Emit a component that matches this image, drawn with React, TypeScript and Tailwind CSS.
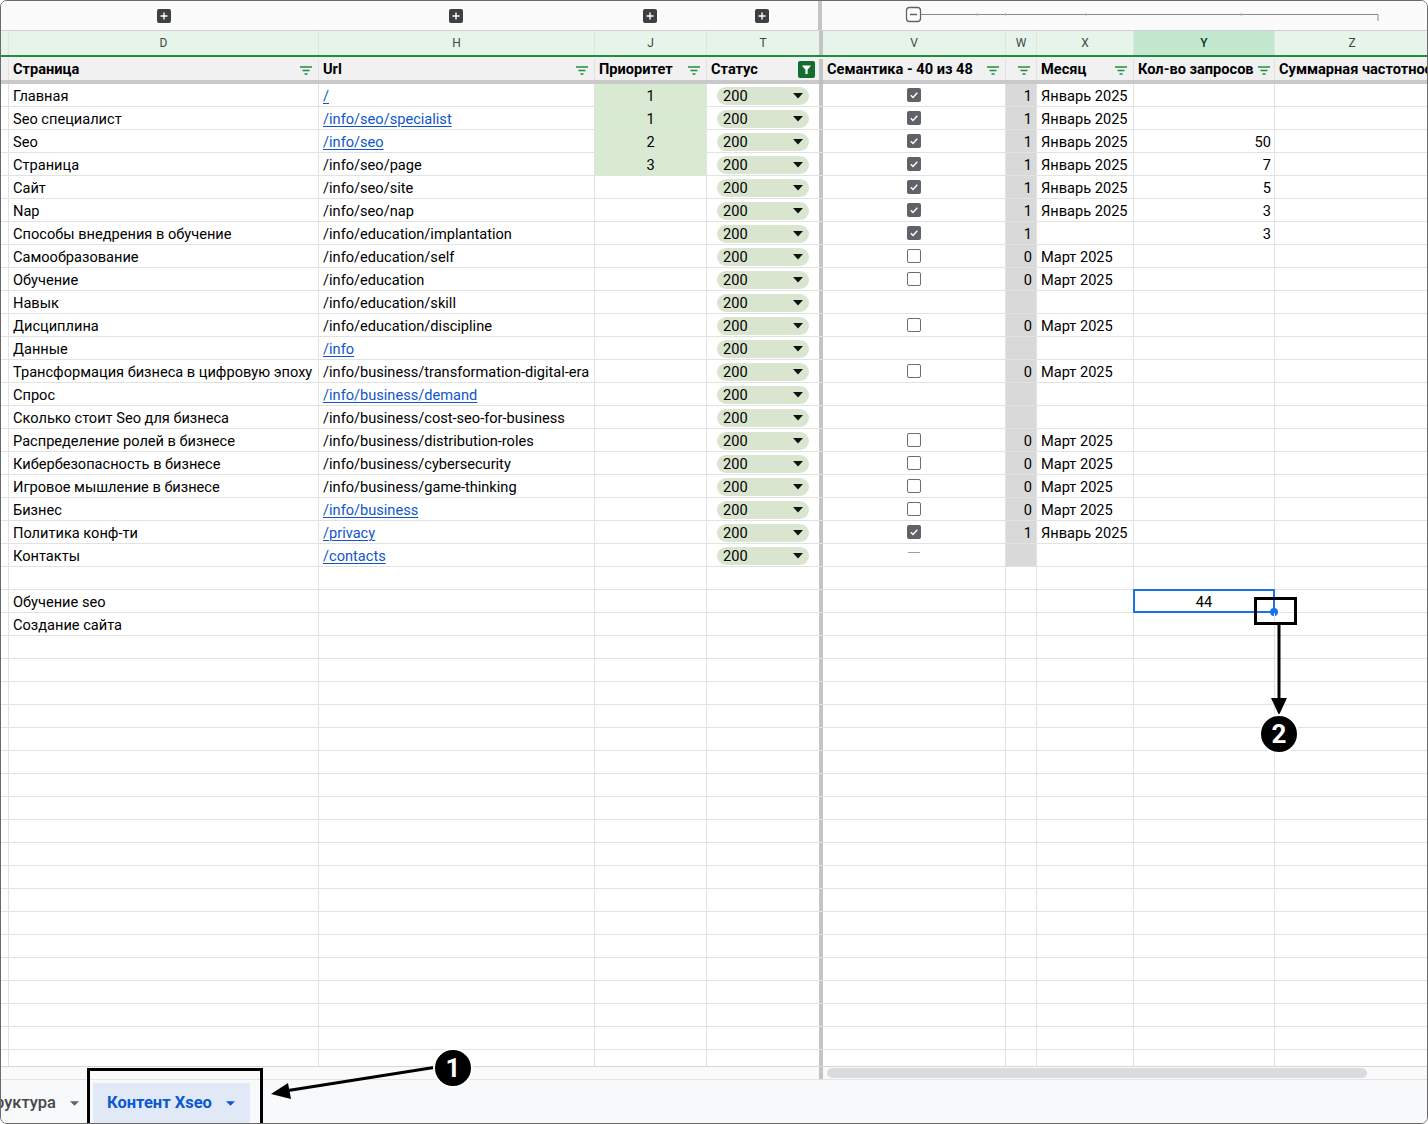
import React from 'react';

type Row = {
  d: string;
  h?: string;
  link?: boolean;
  j?: string;
  status?: boolean;
  v?: 'c' | 'u' | 'dash';
  w?: string;
  wGray?: boolean;
  x?: string;
  y?: string;
  selected?: string;
};

const JAN = 'Январь 2025';
const MAR = 'Март 2025';

const dataRows: Row[] = [
  { d: 'Главная', h: '/', link: true, j: '1', v: 'c', w: '1', x: JAN },
  { d: 'Seo специалист', h: '/info/seo/specialist', link: true, j: '1', v: 'c', w: '1', x: JAN },
  { d: 'Seo', h: '/info/seo', link: true, j: '2', v: 'c', w: '1', x: JAN, y: '50' },
  { d: 'Страница', h: '/info/seo/page', j: '3', v: 'c', w: '1', x: JAN, y: '7' },
  { d: 'Сайт', h: '/info/seo/site', v: 'c', w: '1', x: JAN, y: '5' },
  { d: 'Nap', h: '/info/seo/nap', v: 'c', w: '1', x: JAN, y: '3' },
  { d: 'Способы внедрения в обучение', h: '/info/education/implantation', v: 'c', w: '1', y: '3' },
  { d: 'Самообразование', h: '/info/education/self', v: 'u', w: '0', x: MAR },
  { d: 'Обучение', h: '/info/education', v: 'u', w: '0', x: MAR },
  { d: 'Навык', h: '/info/education/skill' },
  { d: 'Дисциплина', h: '/info/education/discipline', v: 'u', w: '0', x: MAR },
  { d: 'Данные', h: '/info', link: true },
  { d: 'Трансформация бизнеса в цифровую эпоху', h: '/info/business/transformation-digital-era', v: 'u', w: '0', x: MAR },
  { d: 'Спрос', h: '/info/business/demand', link: true },
  { d: 'Сколько стоит Seo для бизнеса', h: '/info/business/cost-seo-for-business' },
  { d: 'Распределение ролей в бизнесе', h: '/info/business/distribution-roles', v: 'u', w: '0', x: MAR },
  { d: 'Кибербезопасность в бизнесе', h: '/info/business/cybersecurity', v: 'u', w: '0', x: MAR },
  { d: 'Игровое мышление в бизнесе', h: '/info/business/game-thinking', v: 'u', w: '0', x: MAR },
  { d: 'Бизнес', h: '/info/business', link: true, v: 'u', w: '0', x: MAR },
  { d: 'Политика конф-ти', h: '/privacy', link: true, v: 'c', w: '1', x: JAN },
  { d: 'Контакты', h: '/contacts', link: true, v: 'dash' },
].map((r) => ({ ...r, status: true, wGray: true }));

const rows: Row[] = [
  ...dataRows,
  { d: '' },
  { d: 'Обучение seo', selected: '44' },
  { d: 'Создание сайта' },
  ...Array.from({ length: 20 }, () => ({ d: '' })),
];

function FilterIcon() {
  return (
    <svg width="14" height="12" viewBox="0 0 14 12" className="shrink-0">
      <path d="M1 3h12M3.5 6.5h7M5.5 10h3" stroke="#1e8e3e" strokeWidth="1.4" />
    </svg>
  );
}

function ActiveFilter() {
  return (
    <div className="flex h-[17px] w-[17px] shrink-0 items-center justify-center rounded-[2px] bg-[#146c2e]">
      <svg width="11" height="11" viewBox="0 0 12 12">
        <path d="M1 1.5h10L7.2 6.2V11H4.8V6.2Z" fill="#fff" />
      </svg>
    </div>
  );
}

function PlusBox() {
  return (
    <div className="flex h-[14px] w-[14px] items-center justify-center rounded-[2px] bg-[#3c4043]">
      <svg width="10" height="10" viewBox="0 0 10 10">
        <path d="M5 1.5v7M1.5 5h7" stroke="#fff" strokeWidth="1.4" />
      </svg>
    </div>
  );
}

function Checkbox({ kind }: { kind?: 'c' | 'u' | 'dash' }) {
  if (kind === 'c')
    return (
      <div className="flex h-[14px] w-[14px] items-center justify-center rounded-[2px] bg-[#5f6368]">
        <svg width="10" height="10" viewBox="0 0 10 10">
          <path d="M1.8 5.2l2.2 2.2 4.3-4.6" stroke="#fff" strokeWidth="1.4" fill="none" />
        </svg>
      </div>
    );
  if (kind === 'u') return <div className="h-[14px] w-[14px] rounded-[2px] border-[1.6px] border-[#6b6f73]" />;
  if (kind === 'dash') return <div className="mb-[6px] h-px w-[12px] bg-[#9aa0a6]" />;
  return null;
}

function StatusPill() {
  return (
    <div className="ml-[10px] flex h-[18px] w-[92px] items-center justify-between rounded-full bg-[#d9e5cf] pl-[6px] pr-[6px]">
      <span className="pt-[2px]">200</span>
      <svg width="10" height="6" viewBox="0 0 10 6">
        <path d="M0 0h10L5 5.5Z" fill="#111" />
      </svg>
    </div>
  );
}

const cell = 'shrink-0 h-full border-r border-[#e2e2e2] flex items-center';

export default function App() {
  return (
    <div className="relative flex h-[1124px] w-[1428px] flex-col overflow-hidden rounded-[7px] border border-[#6a6a6a] bg-white font-['Roboto',sans-serif] text-[14.6px] text-black">
      {/* group strip */}
      <div className="flex h-[30px] shrink-0 border-b border-[#d0d0d0] bg-[#fbfbfb]">
        <div className="w-[8px] shrink-0" />
        <div className="flex w-[309px] shrink-0 items-center justify-center"><PlusBox /></div>
        <div className="flex w-[276px] shrink-0 items-center justify-center"><PlusBox /></div>
        <div className="flex w-[112px] shrink-0 items-center justify-center"><PlusBox /></div>
        <div className="flex w-[112px] shrink-0 items-center justify-center"><PlusBox /></div>
        <div className="w-[4px] shrink-0 bg-[#c4c4c4]" />
        <div className="flex-1">
          <svg width="606" height="29" viewBox="0 0 606 29">
            <rect x="84.5" y="6.5" width="14" height="14" rx="3" fill="#fff" stroke="#5f6368" strokeWidth="1.3" />
            <path d="M88 13.5h7" stroke="#5f6368" strokeWidth="1.3" />
            <path d="M99 13.5H556V20" stroke="#8a8a8a" strokeWidth="1" fill="none" />
            <path d="M155 12v3M183.5 12v3M264 12v3M419 12v3" stroke="#bbb" strokeWidth="1" />
          </svg>
        </div>
      </div>

      {/* column letters */}
      <div className="flex h-[26px] shrink-0 border-b-2 border-[#1e8e3e] bg-[#e6f4ea] text-[12px] text-[#444746]">
        <div className={`${cell} w-[8px] border-[#c8c8c8]`} />
        <div className={`${cell} w-[310px] justify-center border-[#c8c8c8]`}>D</div>
        <div className={`${cell} w-[276px] justify-center border-[#c8c8c8]`}>H</div>
        <div className={`${cell} w-[112px] justify-center border-[#c8c8c8]`}>J</div>
        <div className={`${cell} w-[112px] justify-center border-none`}>T</div>
        <div className="w-[4px] shrink-0 bg-[#c4c4c4]" />
        <div className={`${cell} w-[183px] justify-center border-[#c8c8c8]`}>V</div>
        <div className={`${cell} w-[31px] justify-center border-[#c8c8c8]`}>W</div>
        <div className={`${cell} w-[97px] justify-center border-[#c8c8c8]`}>X</div>
        <div className={`${cell} w-[141px] justify-center border-[#c8c8c8] bg-[#c4e7cf] font-medium text-[#0d3b1e]`}>Y</div>
        <div className={`${cell} w-[154px] justify-center border-none`}>Z</div>
      </div>

      {/* header row */}
      <div className="flex h-[23px] shrink-0 whitespace-nowrap bg-[#f1f1f1] pt-[2px] font-bold">
        <div className={`${cell} w-[8px] border-[#d6d6d6]`} />
        <div className={`${cell} w-[310px] justify-between border-[#d6d6d6] pl-[4px] pr-[5px]`}>
          <span>Страница</span>
          <FilterIcon />
        </div>
        <div className={`${cell} w-[276px] justify-between border-[#d6d6d6] pl-[4px] pr-[5px]`}>
          <span>Url</span>
          <FilterIcon />
        </div>
        <div className={`${cell} w-[112px] justify-between border-[#d6d6d6] pl-[4px] pr-[5px]`}>
          <span>Приоритет</span>
          <FilterIcon />
        </div>
        <div className={`${cell} w-[112px] justify-between border-none pl-[4px] pr-[4px]`}>
          <span>Статус</span>
          <ActiveFilter />
        </div>
        <div className="w-[4px] shrink-0 bg-[#c4c4c4]" />
        <div className={`${cell} w-[183px] justify-between border-[#d6d6d6] pl-[4px] pr-[5px]`}>
          <span>Семантика - 40 из 48</span>
          <FilterIcon />
        </div>
        <div className={`${cell} w-[31px] justify-end border-[#d6d6d6] pr-[5px]`}>
          <FilterIcon />
        </div>
        <div className={`${cell} w-[97px] justify-between border-[#d6d6d6] pl-[4px] pr-[5px]`}>
          <span>Месяц</span>
          <FilterIcon />
        </div>
        <div className={`${cell} w-[141px] justify-between border-[#d6d6d6] pl-[4px] pr-[3px]`}>
          <span>Кол-во запросов</span>
          <FilterIcon />
        </div>
        <div className={`${cell} w-[154px] overflow-hidden border-none pl-[4px]`}>
          <span>Суммарная частотнос</span>
        </div>
      </div>
      <div className="flex h-[4px] shrink-0">
        <div className="w-[818px] shrink-0 bg-[#c9c9c9]" />
        <div className="w-[4px] shrink-0 bg-[#bdbdbd]" />
        <div className="flex-1 bg-[#c9c9c9]" />
      </div>

      {/* body */}
      <div className="flex flex-1 flex-col overflow-hidden">
        {rows.map((r, i) => (
          <div key={i} className="flex h-[23px] shrink-0 border-b border-[#e2e2e2]">
            <div className={`${cell} w-[8px]`} />
            <div className={`${cell} w-[310px] whitespace-nowrap pl-[4px] pt-[4px]`}>{r.d}</div>
            <div className={`${cell} w-[276px] whitespace-nowrap pl-[4px] pt-[4px]`}>
              {r.h && (r.link ? <span className="text-[#1155cc] underline decoration-1 underline-offset-2">{r.h}</span> : r.h)}
            </div>
            <div className={`${cell} w-[112px] justify-center pt-[4px] ${r.j ? 'bg-[#d9ead3] border-[#c6dcbf]' : ''}`}>{r.j}</div>
            <div className={`${cell} w-[112px] border-none pt-[2px]`}>{r.status && <StatusPill />}</div>
            <div className="w-[4px] shrink-0 bg-[#c4c4c4]" />
            <div className={`${cell} w-[183px] justify-center`}>
              <Checkbox kind={r.v} />
            </div>
            <div className={`${cell} w-[31px] justify-end pr-[4px] pt-[4px] ${r.wGray ? 'bg-[#d9d9d9] border-[#cfcfcf]' : ''}`}>{r.w}</div>
            <div className={`${cell} w-[97px] whitespace-nowrap pl-[4px] pt-[4px]`}>{r.x}</div>
            <div className={`${cell} relative w-[141px] justify-end pr-[3px] pt-[4px]`}>
              {r.selected ? (
                <div className="absolute inset-x-[-1px] top-[-1px] bottom-[-1px] flex items-center justify-center border-2 border-[#1a73e8] pt-[3px]">
                  {r.selected}
                  <div className="absolute bottom-[-5px] right-[-5px] h-[8px] w-[8px] rounded-full bg-[#1a73e8]" />
                </div>
              ) : (
                r.y
              )}
            </div>
            <div className={`${cell} w-[154px] border-none`} />
          </div>
        ))}
      </div>

      {/* scroll row */}
      <div className="flex h-[13px] shrink-0 border-t border-[#d6d6d6] bg-[#fafafa]">
        <div className="w-[818px] shrink-0" />
        <div className="w-[4px] shrink-0 bg-[#c4c4c4]" />
        <div className="flex-1 py-[1px] pl-[4px]">
          <div className="h-[10px] w-[540px] rounded-full bg-[#dadce0]" />
        </div>
      </div>

      {/* tabs */}
      <div className="flex h-[44px] shrink-0 items-end border-t border-[#e3e3e3] bg-[#f8f9fa] text-[16.5px]">
        <div className="-ml-[6px] flex h-[40px] w-[98px] shrink-0 items-center gap-[14px] font-medium text-[#444746]">
          <span>руктура</span>
          <svg width="9" height="5" viewBox="0 0 10 5">
            <path d="M0 0h10L5 5Z" fill="#5f6368" />
          </svg>
        </div>
        <div className="flex h-[40px] w-[157px] shrink-0 items-center gap-[14px] bg-[#e1e9f7] pl-[14px] font-bold text-[#0b57d0]">
          <span>Контент Xseo</span>
          <svg width="9" height="5" viewBox="0 0 10 5">
            <path d="M0 0h10L5 5Z" fill="#0b57d0" />
          </svg>
        </div>
      </div>

      {/* annotations */}
      <div className="pointer-events-none absolute left-[86px] top-[1067px] h-[70px] w-[176px] border-[3px] border-black" />
      <div className="pointer-events-none absolute left-[1253px] top-[596px] h-[28px] w-[43px] border-[3px] border-black" />
      <svg className="pointer-events-none absolute left-0 top-0" width="1428" height="1124" viewBox="0 0 1428 1124">
        <path d="M436 1066L284 1090" stroke="#000" strokeWidth="3" />
        <path d="M270 1093L287 1082L290 1098Z" fill="#000" />
        <path d="M1278 624V700" stroke="#000" strokeWidth="3" />
        <path d="M1278 714L1270 697H1286Z" fill="#000" />
      </svg>
      <div className="pointer-events-none absolute left-[432px] top-[1047px] flex h-[40px] w-[40px] items-center justify-center rounded-full border-2 border-white bg-black text-[26px] font-bold text-white">
        1
      </div>
      <div className="pointer-events-none absolute left-[1258px] top-[713px] flex h-[40px] w-[40px] items-center justify-center rounded-full border-2 border-white bg-black text-[26px] font-bold text-white">
        2
      </div>
    </div>
  );
}
